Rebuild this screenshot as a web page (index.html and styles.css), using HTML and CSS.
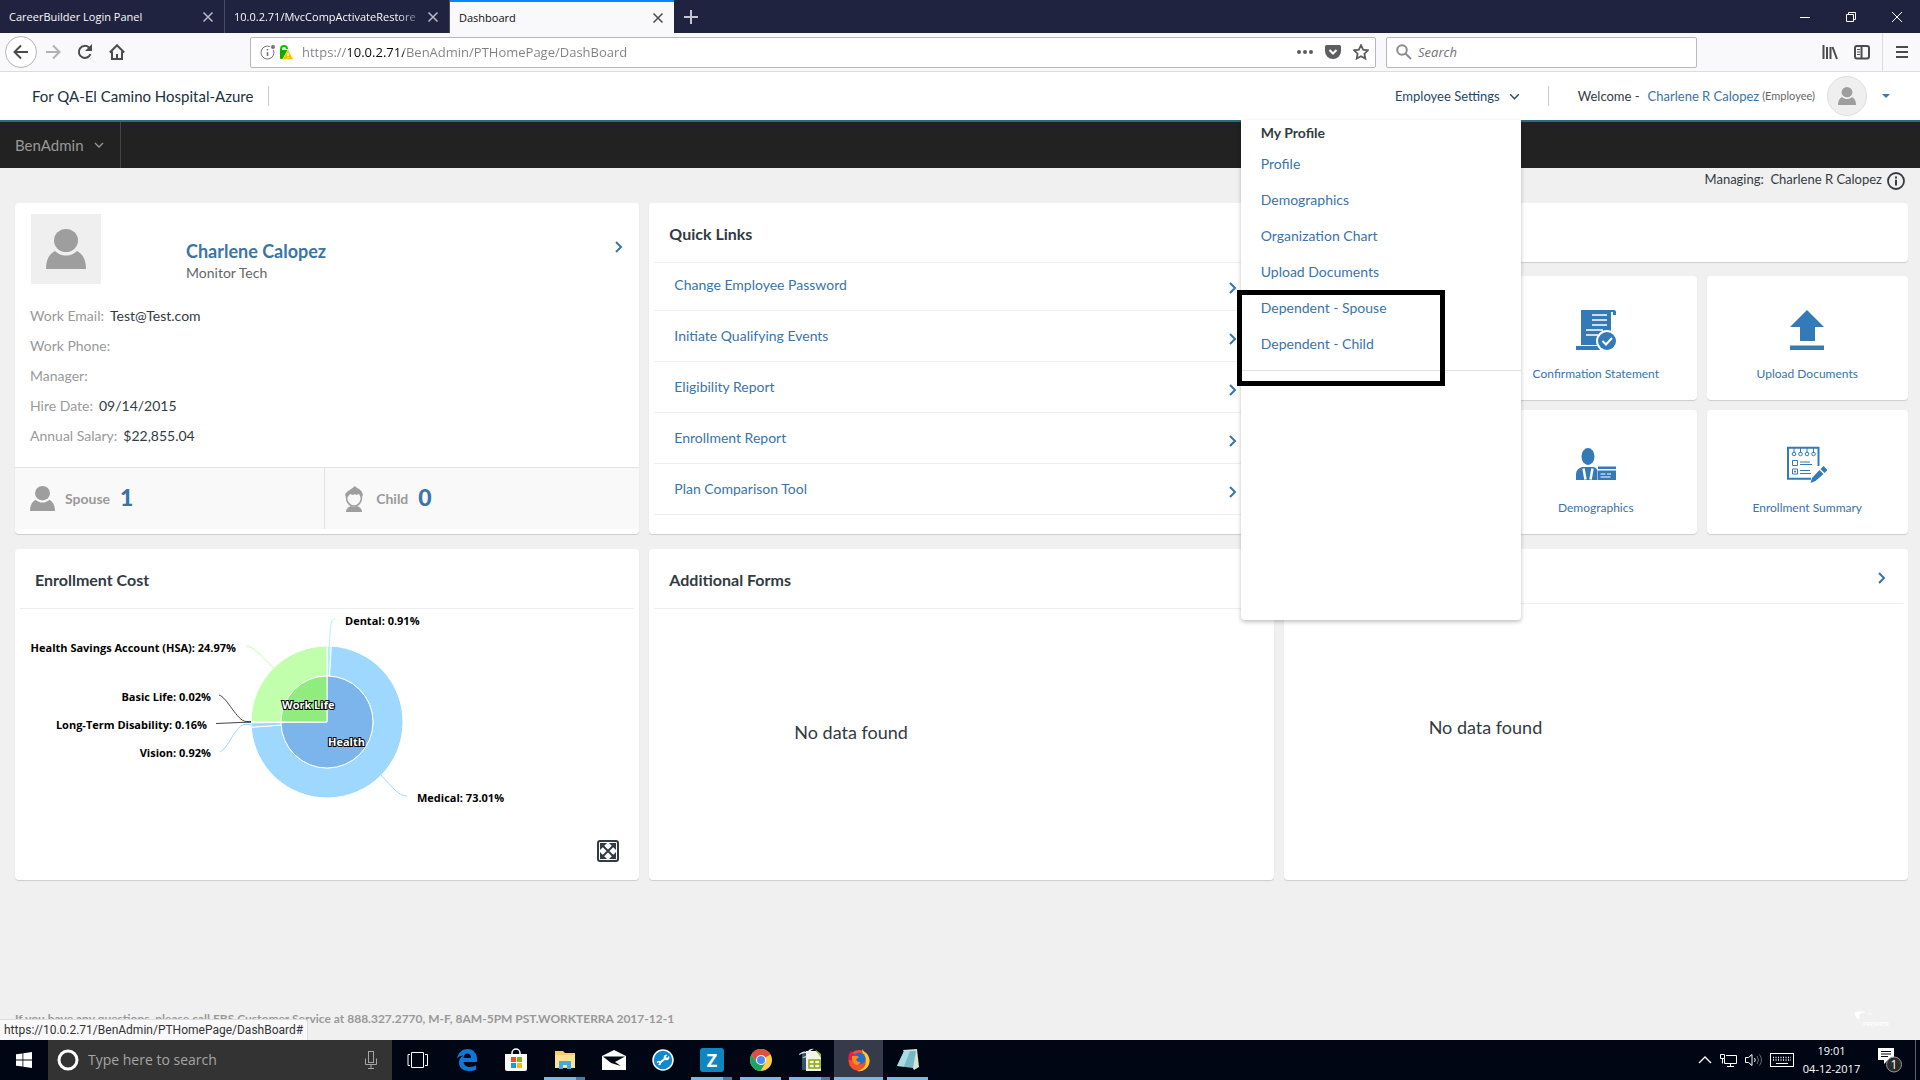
FILE: index.html
```html
<!DOCTYPE html>
<html lang="en">
<head>
    <meta charset="UTF-8">
    <meta name="viewport" content="width=device-width, initial-scale=1.0">
    <title>Dashboard</title>
    <link rel="stylesheet" href="styles.css">
</head>
<body>
    <svg class="sprite" width="0" height="0" aria-hidden="true">
        <symbol id="close" viewBox="0 0 12 12"><path d="M1.500 1.500l9 9M10.500 1.500l-9 9" fill="none" stroke="currentColor" stroke-width="1.500"/></symbol>
        <symbol id="chevron-down" viewBox="0 0 12 12"><path d="M2 4l4 4 4-4" fill="none" stroke="currentColor" stroke-width="1.300"/></symbol>
        <symbol id="chevron-right" viewBox="0 0 10 14"><path d="M2 2l5 5-5 5" fill="none" stroke="currentColor" stroke-width="2"/></symbol>
        <symbol id="person" viewBox="0 0 40 40"><ellipse cx="20" cy="11.500" rx="12" ry="11.500"/><path d="M0 40c0-9 3-15 9-18 6 6 16 6 22 0 6 3 9 9 9 18z"/></symbol>
    </svg>

    <!-- Browser tabs -->
    <div class="tab-bar">
        <div class="tab">
            <span class="tab-title">CareerBuilder Login Panel</span>
            <button class="tab-close" aria-label="Close tab"><svg width="12" height="12"><use href="#close"/></svg></button>
        </div>
        <div class="tab">
            <span class="tab-title faded">10.0.2.71/MvcCompActivateRestore</span>
            <button class="tab-close" aria-label="Close tab"><svg width="12" height="12"><use href="#close"/></svg></button>
        </div>
        <div class="tab active">
            <span class="tab-title">Dashboard</span>
            <button class="tab-close" aria-label="Close tab"><svg width="12" height="12"><use href="#close"/></svg></button>
        </div>
        <button class="new-tab" aria-label="New tab"><svg width="14" height="14" viewBox="0 0 14 14"><path d="M7 0v14M0 7h14" stroke="currentColor" stroke-width="2"/></svg></button>
        <div class="window-buttons">
            <button aria-label="Minimize"><svg width="10" height="10" viewBox="0 0 10 10"><path d="M0 5.500h10" stroke="#fff"/></svg></button>
            <button aria-label="Restore"><svg width="12" height="12" viewBox="0 0 12 12" fill="none" stroke="#fff"><path d="M1.500 3.500h7v7h-7zM3.500 3.500v-2h7v7h-2"/></svg></button>
            <button aria-label="Close"><svg width="12" height="12" viewBox="0 0 12 12"><path d="M1 1l10 10M11 1L1 11" stroke="#fff"/></svg></button>
        </div>
    </div>

    <!-- Browser toolbar -->
    <div class="toolbar">
        <button class="nav-btn back" aria-label="Back"><svg width="16" height="16" viewBox="0 0 16 16" fill="none" stroke="#4a4a4f" stroke-width="2"><path d="M15 8H2M8 1.500L1.500 8 8 14.500"/></svg></button>
        <button class="nav-btn" aria-label="Forward"><svg width="16" height="16" viewBox="0 0 16 16" fill="none" stroke="#b1b1b3" stroke-width="2"><path d="M1 8h13M8 1.500L14.500 8 8 14.500"/></svg></button>
        <button class="nav-btn" aria-label="Reload"><svg width="16" height="16" viewBox="0 0 16 16" fill="none" stroke="#4a4a4f" stroke-width="2"><path d="M13.500 10A6 6 0 1 1 12 3.500"/><path d="M15 0v7H8z" fill="#4a4a4f" stroke="none"/></svg></button>
        <button class="nav-btn" aria-label="Home"><svg width="16" height="16" viewBox="0 0 16 16" fill="none" stroke="#4a4a4f" stroke-width="2"><path d="M.800 8.500L8 1.300l7.200 7.200M3 7.500V15h10V7.500"/><path d="M7 10h2v5H7z" fill="#4a4a4f" stroke="none"/></svg></button>
        <div class="url-bar">
            <svg width="16" height="16" viewBox="0 0 16 16"><circle cx="7.500" cy="8.500" r="6.500" fill="none" stroke="#737373"/><path d="M7.500 5v1.500M7.500 8v4" stroke="#737373" stroke-width="1.500"/><circle cx="13" cy="3" r="3" fill="#fff"/><circle cx="13" cy="3" r="2" fill="#737373"/></svg>
            <svg width="16" height="16" viewBox="0 0 16 16"><path d="M3 7V5a3 3 0 0 1 6 0" fill="none" stroke="#12bc00" stroke-width="2"/><rect x="2" y="6" width="9" height="9" rx="1" fill="#12a800"/><path d="M10 5.500l5.500 10h-11z" fill="#ffbf00" stroke="#fff" stroke-width=".500"/><path d="M10 9v3M10 13v1" stroke="#fff" stroke-width="1.300"/></svg>
            <input class="url-input" type="text" aria-label="Address" value="https://10.0.2.71/BenAdmin/PTHomePage/DashBoard">
            <button aria-label="Page actions"><svg width="16" height="16" viewBox="0 0 16 16" fill="#5c5c61"><circle cx="2" cy="8" r="2"/><circle cx="8" cy="8" r="2"/><circle cx="14" cy="8" r="2"/></svg></button>
            <button aria-label="Save to Pocket"><svg width="16" height="16" viewBox="0 0 16 16"><path d="M1.500 1h13Q16 1 16 2.500V7a8 8 0 0 1-16 0V2.500Q0 1 1.500 1z" fill="#5c5c61"/><path d="M4.500 6L8 9.500 11.500 6" fill="none" stroke="#fff" stroke-width="2"/></svg></button>
            <button aria-label="Bookmark"><svg width="16" height="16" viewBox="0 0 16 16"><path d="M8 1.200l2.100 4.500 4.900.600-3.600 3.400.900 4.900L8 12.200l-4.300 2.400.900-4.900L1 6.300l4.900-.600z" fill="none" stroke="#5c5c61" stroke-width="1.800"/></svg></button>
        </div>
        <label class="search-bar">
            <svg width="16" height="16" viewBox="0 0 16 16" fill="none" stroke="#8c8c90" stroke-width="2"><circle cx="6" cy="6" r="4.800"/><path d="M9.500 9.500L15 15"/></svg>
            <input type="search" placeholder="Search" aria-label="Search">
        </label>
        <div class="toolbar-right">
            <button aria-label="Library"><svg width="16" height="16" viewBox="0 0 16 16" stroke="#4a4a4f" stroke-width="2"><path d="M1.500 1v14M5 3v12M8.500 3v12M10.500 3l4.500 12"/></svg></button>
            <button aria-label="Sidebars"><svg width="16" height="16" viewBox="0 0 16 16" fill="none" stroke="#4a4a4f" stroke-width="2"><rect x="1" y="2" width="14" height="12.500" rx="2"/><path d="M7.500 2v12"/><path d="M3 5.500h3M3 8h3M3 10.500h3" stroke-width="1"/></svg></button>
            <button class="menu-btn" aria-label="Menu"><svg width="12" height="14" viewBox="0 0 12 14" stroke="#4a4a4f" stroke-width="2"><path d="M0 2h12M0 7h12M0 12h12"/></svg></button>
        </div>
    </div>

    <!-- Application -->
    <header class="app-header">
        <div class="company">For QA-El Camino Hospital-Azure</div>
        <div class="header-right">
            <div class="settings">
                <button class="settings-btn">Employee Settings <svg width="13" height="13"><use href="#chevron-down"/></svg></button>
                <nav class="settings-menu">
                    <h4>My Profile</h4>
                    <ul>
                        <li><a href="#">Profile</a></li>
                        <li><a href="#">Demographics</a></li>
                        <li><a href="#">Organization Chart</a></li>
                        <li><a href="#">Upload Documents</a></li>
                        <li><a href="#">Dependent - Spouse</a></li>
                        <li><a href="#">Dependent - Child</a></li>
                    </ul>
                    <div class="highlight"></div>
                </nav>
            </div>
            <div class="welcome">
                <span class="welcome-label">Welcome -</span>
                <a href="#">Charlene R Calopez</a>
                <small>(Employee)</small>
                <span class="user-circle"><svg width="18" height="18"><use href="#person"/></svg></span>
                <button class="caret" aria-label="Account menu"></button>
            </div>
        </div>
    </header>

    <nav class="main-nav">
        <button>BenAdmin <svg width="12" height="12"><use href="#chevron-down"/></svg></button>
    </nav>

    <main>
        <div class="managing">
            <span>Managing:&nbsp; Charlene R Calopez</span>
            <svg width="18" height="18" viewBox="0 0 18 18"><circle cx="9" cy="9" r="8" fill="none" stroke="#333b42" stroke-width="1.800"/><path d="M9 4.500v2M9 7.800V13.500" stroke="#333b42" stroke-width="2"/></svg>
        </div>

        <div class="dashboard">
            <section class="card profile">
                <div class="profile-top">
                    <div class="photo"><svg width="40" height="40"><use href="#person"/></svg></div>
                    <div class="who">
                        <a href="#">Charlene Calopez</a>
                        <p>Monitor Tech</p>
                    </div>
                    <a class="go" href="#" aria-label="Open profile"><svg width="10" height="14"><use href="#chevron-right"/></svg></a>
                </div>
                <dl class="details">
                    <div><dt>Work Email:</dt><dd>Test@Test.com</dd></div>
                    <div><dt>Work Phone:</dt><dd></dd></div>
                    <div><dt>Manager:</dt><dd></dd></div>
                    <div><dt>Hire Date:</dt><dd>09/14/2015</dd></div>
                    <div><dt>Annual Salary:</dt><dd>$22,855.04</dd></div>
                </dl>
                <div class="family">
                    <div class="member">
                        <svg width="25" height="25"><use href="#person"/></svg>
                        <span>Spouse</span><b>1</b>
                    </div>
                    <div class="member child">
                        <svg width="18" height="26" viewBox="0 0 18 26"><path d="M10 0c1 2 7 3 8 9l-2 3-2-4-3 1-1-1-2 1-3-1-3 4-2-3C1 5 6 4 10 0z"/><path d="M2 8c-2 8 3 12 7 12s9-4 7-12" fill="none" stroke="#9e9e9e" stroke-width="1.500"/><path d="M1 26c0-3 2-5 5-6 2 1 4 1 6 0 3 1 5 3 5 6z"/></svg>
                        <span>Child</span><b>0</b>
                    </div>
                </div>
            </section>

            <section class="card quick-links">
                <h2>Quick Links</h2>
                <ul>
                    <li><a href="#">Change Employee Password <svg width="10" height="14"><use href="#chevron-right"/></svg></a></li>
                    <li><a href="#">Initiate Qualifying Events <svg width="10" height="14"><use href="#chevron-right"/></svg></a></li>
                    <li><a href="#">Eligibility Report <svg width="10" height="14"><use href="#chevron-right"/></svg></a></li>
                    <li><a href="#">Enrollment Report <svg width="10" height="14"><use href="#chevron-right"/></svg></a></li>
                    <li><a href="#">Plan Comparison Tool <svg width="10" height="14"><use href="#chevron-right"/></svg></a></li>
                </ul>
            </section>

            <section class="actions">
                <div class="card strip"></div>
                <div class="card tile"></div>
                <a class="card tile" href="#">
                    <svg width="40" height="40" viewBox="0 0 40 40"><path d="M5 0h33q2 0 2 2v3h-3V2h-2v33H5z"/><path d="M0 36h24v4H0z"/><path d="M16 5h15M16 10h15M16 15h15M10 20h17M10 25h12" stroke="#fff" stroke-width="1.500"/><circle cx="31" cy="31" r="11" fill="#fff"/><circle cx="31" cy="31" r="9"/><path d="M26.500 31l3.500 3.500 6-6.500" fill="none" stroke="#fff" stroke-width="2"/></svg>
                    <span>Confirmation Statement</span>
                </a>
                <a class="card tile" href="#">
                    <svg width="40" height="40" viewBox="0 0 40 40"><path d="M20 0l17 17h-9v14H13V17H3zM3 35.500h34V40H3z"/></svg>
                    <span>Upload Documents</span>
                </a>
                <div class="card tile"></div>
                <a class="card tile" href="#">
                    <svg width="40" height="40" viewBox="0 0 40 40"><ellipse cx="12" cy="12.500" rx="6.500" ry="8.500"/><path d="M0 36v-6q0-5 6-7h12q3 1 3.500 4V36z"/><path d="M7.500 24.500l2 11M16.500 24.500l-2 11" stroke="#fff" stroke-width="2.500"/><path d="M22 22.500h18v2.500H22zM22 26.500h18V36H22z"/><path d="M24.500 30h5M31 30h4M24.500 33h10" stroke="#fff" stroke-width="1"/></svg>
                    <span>Demographics</span>
                </a>
                <a class="card tile" href="#">
                    <svg width="40" height="40" viewBox="0 0 40 40"><g fill="none" stroke="#337ab7"><path d="M31.500 22V3.700H1v31h23" stroke-width="2"/><path d="M7 4v5M13.500 4v5M20 4v5M26.500 4v5" stroke-width="1"/><circle cx="7" cy="10" r="1.800"/><circle cx="13.500" cy="10" r="1.800"/><circle cx="20" cy="10" r="1.800"/><circle cx="26.500" cy="10" r="1.800"/><path d="M5.500 16.500h5v5h-5zM5.500 25h5v5h-5zM13 18h10M13 20.500h12M13 26.500h10M13 29.500h11"/></g><circle cx="8" cy="27.500" r="1"/><path d="M36.500 22l4 4-3 3-4-4zM32.500 26l4 4-8 7-5 2 1.500-5z"/></svg>
                    <span>Enrollment Summary</span>
                </a>
            </section>

            <section class="card panel">
                <h2>Enrollment Cost</h2>
                <div class="chart">
                    <svg width="624" height="230" viewBox="0 0 624 230">
                        <g class="slices">
                            <path fill="#aef0ff" d="M312 67V37A76 76 0 0 1 316.300 37.100L314.600 67.100A46 46 0 0 0 312 67z"/>
                            <path fill="#9fd8ff" d="M314.600 67.100L316.300 37.100A76 76 0 1 1 236.200 118.200L266.100 116.100A46 46 0 1 0 314.600 67.100z"/>
                            <path fill="#9fd8ff" d="M266.100 116.100L236.200 118.200A76 76 0 0 1 236 113.800L266 113.500z"/>
                            <path fill="#c2ffad" d="M266 112.800L236 112.800A76 76 0 0 1 312 37V67A46 46 0 0 0 266 112.800z"/>
                            <path fill="#7cb5ec" d="M312 113V67A46 46 0 1 1 266 113.500z"/>
                            <path fill="#90ed7d" d="M312 113H266A46 46 0 0 1 312 67z"/>
                        </g>
                        <g class="connectors">
                            <path stroke="#b3ecfa" d="M320 10C316 10 315 16 314.500 37"/>
                            <path stroke="#c2ffad" d="M231 37C238 37 246 47 259 59"/>
                            <path stroke="#434348" d="M204 86C212 88 222 112 231 112.500H236"/>
                            <path stroke="#434348" d="M201 114.500L230 113.300H236"/>
                            <path stroke="#9fd8ff" d="M205 143C213 140 220 117 229 115.500H236"/>
                            <path stroke="#9fd8ff" d="M366 166C378 179 384 187 392 187"/>
                        </g>
                        <g class="labels">
                            <text x="330" y="16">Dental: 0.91%</text>
                            <text x="221" y="43" text-anchor="end">Health Savings Account (HSA): 24.97%</text>
                            <text x="196" y="92" text-anchor="end">Basic Life: 0.02%</text>
                            <text x="192" y="120" text-anchor="end">Long-Term Disability: 0.16%</text>
                            <text x="196" y="148" text-anchor="end">Vision: 0.92%</text>
                            <text x="402" y="193">Medical: 73.01%</text>
                            <text class="inner" x="267" y="100">Work Life</text>
                            <text class="inner" x="313" y="137">Health</text>
                        </g>
                    </svg>
                    <button class="expand" aria-label="Expand chart"><svg width="22" height="22" viewBox="0 0 22 22"><rect x="1" y="1" width="20" height="20" rx="2" fill="#fff" stroke="#333b42" stroke-width="2"/><path d="M6 6l10 10M16 6L6 16" stroke="#333b42" stroke-width="2"/><path d="M3 3h7l-7 7zM19 3h-7l7 7zM3 19h7l-7-7zM19 19h-7l7-7z" fill="#333b42"/></svg></button>
                </div>
            </section>

            <section class="card panel">
                <h2>Additional Forms</h2>
                <p class="empty">No data found</p>
            </section>

            <section class="card panel">
                <div class="panel-bar"><a href="#" aria-label="Open"><svg width="10" height="14"><use href="#chevron-right"/></svg></a></div>
                <p class="empty">No data found</p>
            </section>
        </div>
    </main>

    <footer class="app-footer">
        <span>If you have any questions, please call EBS Customer Service at 888.327.2770, M-F, 8AM-5PM PST.WORKTERRA 2017-12-1</span>
        <svg class="watermark" width="46" height="24" viewBox="0 0 46 24"><path d="M11 3Q-1 1 1 6t5 3Q2 5 11 3zM16 0v7M13 5h6" fill="#fff" stroke="#fff" stroke-width=".500"/><text x="9" y="17">PREMIER</text></svg>
        <div class="status">https://10.0.2.71/BenAdmin/PTHomePage/DashBoard#</div>
    </footer>

    <!-- Windows taskbar -->
    <div class="taskbar">
        <button class="start" aria-label="Start"><svg width="16" height="16" viewBox="0 0 16 16" fill="#fff"><path d="M0 2.300l6.500-.900v6.200H0zM7.300 1.200L16 0v7.600H7.300zM0 8.400h6.500v6.200L0 13.700zM7.300 8.400H16V16l-8.700-1.200z"/></svg></button>
        <label class="task-search">
            <svg width="22" height="22" viewBox="0 0 22 22"><circle cx="11" cy="11" r="9" fill="none" stroke="#fff" stroke-width="3"/></svg>
            <input type="text" placeholder="Type here to search" aria-label="Type here to search">
            <svg width="12" height="18" viewBox="0 0 12 18" fill="none" stroke="#a5a5a5"><rect x="3.500" y=".500" width="5" height="11"/><path d="M.500 7.500v6h11v-6M6 13.500V17M3 17.500h6"/></svg>
        </label>
        <div class="apps">
            <button aria-label="Task view"><svg width="22" height="16" viewBox="0 0 22 16" fill="none" stroke="#fff"><path d="M4.500.500h12v15h-12zM3 2.500H1v11h2M18 2.500h2.500v11H18"/></svg></button>
            <button aria-label="Edge"><svg width="22" height="22" viewBox="0 0 22 22"><path d="M1 10C2 3 7 0 11.500 0 18 0 21 5 21 10v3H7.500c.500 3 3 5 6.500 5 2.500 0 4.500-.700 6-1.700v4.200c-2 1-4 1.500-7 1.500C7 22 3 18.500 3 13.500c0-3 1.500-5.500 4.500-7C4.500 6.500 2 8 1 10zm6.500-1H15c0-3-1.500-4.500-3.700-4.500C9 4.500 7.800 6.500 7.500 9z" fill="#0f78d4"/></svg></button>
            <button aria-label="Store"><svg width="24" height="24" viewBox="0 0 24 24"><path d="M8 8V5a4 4 0 0 1 8 0v3" fill="none" stroke="#fff" stroke-width="1.500"/><path d="M1 6h22v15q0 2-2 2H3q-2 0-2-2z" fill="#fff"/><path d="M7 9h5v5H7z" fill="#f25022"/><path d="M13 9h5v5h-5z" fill="#7fba00"/><path d="M7 15h5v5H7z" fill="#00a4ef"/><path d="M13 15h5v5h-5z" fill="#ffb900"/></svg></button>
            <button class="open stacked" aria-label="File Explorer"><svg width="24" height="22" viewBox="0 0 24 22"><path d="M2 2h8l2 2h10v14H2z" fill="#f5cf6b"/><path d="M2 6h20v13H2z" fill="#fbe393"/><path d="M6 20v-8h12v8h-4v-4h-4v4z" fill="#45a9db"/></svg></button>
            <button aria-label="Mail"><svg width="24" height="20" viewBox="0 0 24 20"><path d="M0 6L12 0l12 6v14H0z" fill="#fff"/><path d="M1 6.500h22L13 12l6 4-10-3z" fill="#010614"/></svg></button>
            <button aria-label="Tools"><svg width="22" height="22" viewBox="0 0 22 22"><circle cx="11" cy="11" r="10" fill="#118acb" stroke="#fff" stroke-width="1.500"/><path d="M7 14.500L15 8" stroke="#fff" stroke-width="2"/><circle cx="7" cy="14" r="2.200" fill="#fff"/><circle cx="14.500" cy="8.500" r="2.800" fill="#fff"/><path d="M14.500 8.500l3-4M7 14l-3 2" stroke="#118acb" stroke-width="1.800"/></svg></button>
            <button class="open stacked" aria-label="Z"><svg width="24" height="24" viewBox="0 0 24 24"><rect width="24" height="24" rx="3" fill="#0e86bf"/><text class="z-logo" x="12" y="19">Z</text></svg></button>
            <button class="open" aria-label="Chrome"><svg width="22" height="22" viewBox="0 0 22 22"><circle cx="11" cy="11" r="11" fill="#ffcd46"/><path d="M11 11L1.500 5.500A11 11 0 0 1 20.500 5.500z" fill="#dd5144"/><path d="M11 6h9.800A11 11 0 0 0 1.500 5.500l5 8z" fill="#dd5144"/><path d="M1.500 5.500A11 11 0 0 0 10.500 22l5-8.500-9 0z" fill="#1da462"/><circle cx="11" cy="11" r="5" fill="#fff"/><circle cx="11" cy="11" r="4" fill="#4c8bf5"/></svg></button>
            <button class="open stacked" aria-label="Spreadsheet"><svg width="24" height="24" viewBox="0 0 24 24"><path d="M4 6h5v16H4z" fill="#35536b"/><path d="M8 3h10l5 5v15H8z" fill="#f2f5e6"/><path d="M17 1l6 5v4z" fill="#9cb63a"/><path d="M11 12h11v8H11zM16.500 12v8M11 16h11" fill="#f6f9cc" stroke="#8ba51e" stroke-width="1.500"/><path d="M0 7q5-5 9-3 3-4 7-3-4 1-5 5-4-2-11 1zM4 10q3-3 6-1" fill="#dfe9f0"/></svg></button>
            <button class="open current" aria-label="Firefox"><svg width="24" height="24" viewBox="0 0 24 24"><circle cx="12" cy="12.500" r="10.500" fill="#f9502a"/><path d="M15 1q2 3 4 4 4 4 3.500 9A10.500 10.500 0 0 1 10 23q9-2 9-10 0-4-3-6z" fill="#ffcb2b"/><path d="M1.500 12Q1 6 4 3l1.500 2.500L9 6l-2 3 1 4z" fill="#e6204c"/><circle cx="12.500" cy="10.500" r="6" fill="#1f6fd0"/><path d="M5 8q5-1 7 1l-3 2.500q1 3 4.500 2.500-1 3-4 3-5-1-4.500-9z" fill="#ff8a16"/></svg></button>
            <button class="open" aria-label="Notepad"><svg width="24" height="24" viewBox="0 0 24 24"><path d="M7 2l14-1 2 18-5 3z" fill="#d9e2d0"/><path d="M8 3h12l-3 17-16-2z" fill="#75b8c6"/><path d="M8 3h6L8 18.500l-7-.500z" fill="#a9dbe2"/></svg></button>
        </div>
        <div class="tray">
            <svg width="14" height="8" viewBox="0 0 14 8"><path d="M1 7l6-6 6 6" fill="none" stroke="#fff" stroke-width="1.300"/></svg>
            <svg width="17" height="15" viewBox="0 0 17 15" fill="none" stroke="#fff"><path d="M6 2.500h10.500v8H4.500V6M10.500 10.500v3M7 13.500h7M.500 1.500h4v4h-4zM2.500 5.500v5"/></svg>
            <svg width="17" height="14" viewBox="0 0 17 14" fill="none" stroke="#fff"><path d="M.500 4.500h3L7 1.500v11l-3.500-3h-3z"/><path d="M9.500 5q1.500 2 0 4"/><path d="M12 3q3 4 0 8M14.500 1.500q4 5.500 0 11" stroke="#666d7c"/></svg>
            <svg width="24" height="14" viewBox="0 0 24 14" fill="none" stroke="#fff"><rect x=".500" y=".500" width="23" height="13"/><path d="M3 4.500h18M3 7h18" stroke-dasharray="1 1.500" stroke-width="1.500"/><path d="M6 10.500h12"/></svg>
            <time class="clock"><span>19:01</span><span>04-12-2017</span></time>
            <button class="notify" aria-label="Notifications"><svg width="24" height="25" viewBox="0 0 24 25"><path d="M0 0h16v12h-6l-4 4v-4H0z" fill="#fff"/><path d="M3 3.500h10M3 6h10M3 8.500h7" stroke="#010614"/><circle cx="16" cy="16.500" r="7.500" fill="#2b2b2b" stroke="#9a9a9a"/><text x="16" y="21">1</text></svg></button>
        </div>
    </div>
</body>
</html>
```
FILE: styles.css
```css
* {
    box-sizing: border-box;
}

body {
    margin: 0;
    min-height: 100vh;
    display: flex;
    flex-direction: column;
    font-family: Lato, "Open Sans", sans-serif;
    font-size: 14px;
    line-height: 20px;
    color: #333b42;
    background: #f0f0f0;
}

a {
    color: #3a74a8;
    text-decoration: none;
}

button {
    border: none;
    background: none;
    padding: 0;
    font: inherit;
    color: inherit;
    display: flex;
    align-items: center;
    justify-content: center;
}

input {
    border: none;
    background: none;
    outline: none;
    padding: 0;
    font: inherit;
    min-width: 0;
    flex: 1;
}

ul, dl, dd, p, h2, h4 {
    margin: 0;
    padding: 0;
}

ul {
    list-style: none;
}

svg {
    flex: none;
    display: block;
}

.sprite {
    position: absolute;
}

/* Browser */
.tab-bar {
    display: flex;
    height: 33px;
    background: #20233f;
    color: #f9f9fa;
    font-family: "Open Sans", sans-serif;
    font-size: 11px;
}

.tab {
    width: 225px;
    padding: 0 9px;
    display: flex;
    align-items: center;
    border-right: 1px solid #4a4c63;
}

.tab.active {
    width: 224px;
    background: #f9f9fb;
    color: #0c0c0d;
    border-top: 2px solid #0a84ff;
    border-right: none;
}

.tab-title {
    flex: 1;
    overflow: hidden;
    white-space: nowrap;
}

.tab-title.faded {
    mask-image: linear-gradient(to right, #000 85%, transparent);
}

.tab-close {
    width: 14px;
    color: #b9bac5;
}

.tab.active .tab-close {
    color: #4a4a4f;
}

.new-tab {
    width: 34px;
    color: #c5c6cf;
}

.window-buttons {
    margin-left: auto;
    display: flex;
}

.window-buttons button {
    width: 46px;
}

.toolbar {
    height: 39px;
    display: flex;
    align-items: center;
    background: #f9f9fb;
    border-bottom: 1px solid #dcdcde;
    padding-left: 5px;
    font-family: "Open Sans", sans-serif;
}

.nav-btn {
    width: 32px;
    height: 32px;
}

.nav-btn.back {
    border: 1px solid #b5b5b7;
    border-radius: 50%;
    background: #fff;
}

.url-bar,
.search-bar {
    height: 31px;
    display: flex;
    align-items: center;
    background: #fff;
    border: 1px solid #b8b8ba;
    border-radius: 2px;
}

.url-bar {
    flex: 1;
    margin-left: 117px;
    padding: 0 1px 0 9px;
    gap: 2px;
}

.url-bar button {
    width: 26px;
}

/* host part of the address is darker than the rest */
.url-input {
    margin-left: 6px;
    font-size: 13px;
    color: transparent;
    background: linear-gradient(to right, #808084 46px, #0c0c0d 46px, #0c0c0d 102px, #808084 102px);
    background-clip: text;
    -webkit-background-clip: text;
}

.search-bar {
    width: 311px;
    margin-left: 10px;
    padding: 0 9px;
    gap: 6px;
    font-size: 13px;
    font-style: italic;
}

.search-bar input::placeholder {
    color: #737377;
}

.toolbar-right {
    width: 223px;
    height: 100%;
    display: flex;
    justify-content: flex-end;
}

.toolbar-right button {
    width: 32px;
}

.toolbar-right .menu-btn {
    width: 38px;
    margin-left: 4px;
    border-left: 1px solid #dcdcde;
}

/* App header */
.app-header {
    height: 50px;
    display: flex;
    align-items: center;
    justify-content: space-between;
    background: #fff;
    border-bottom: 2px solid #23707f;
    padding-left: 32px;
}

.company {
    font-size: 15px;
    padding-right: 15px;
    border-right: 1px solid #ccc;
    color: #20303c;
}

.header-right {
    display: flex;
    align-items: center;
    align-self: stretch;
    font-size: 13px;
}

.settings {
    position: relative;
    align-self: stretch;
    display: flex;
    align-items: center;
}

.settings-btn {
    gap: 8px;
    color: #234968;
}

.settings-menu {
    position: absolute;
    top: 100%;
    right: 0;
    width: 280px;
    height: 500px;
    padding-top: 2px;
    font-size: 14px;
    background: #fff;
    border-radius: 0 0 4px 4px;
    box-shadow: 0 2px 4px rgba(0, 0, 0, 0.25);
    z-index: 10;
}

.settings-menu h4 {
    padding-left: 20px;
    font-size: 14px;
    line-height: 22px;
}

.settings-menu ul {
    padding: 2px 0 8px 20px;
    border-bottom: 1px solid #e2e2e2;
}

.settings-menu li {
    line-height: 36px;
}

.highlight {
    position: absolute;
    top: 170px;
    left: -4px;
    width: 208px;
    height: 96px;
    border: 5px solid #000;
}

.welcome {
    display: flex;
    align-items: center;
    margin-left: 27px;
    padding-left: 30px;
    position: relative;
}

.welcome::before {
    content: '';
    position: absolute;
    left: 0;
    top: 10px;
    height: 20px;
    border-left: 1px solid #ccc;
}

.welcome-label {
    margin-right: 8px;
}

.welcome small {
    font-size: 11px;
    margin-left: 3px;
    color: #666;
}

.user-circle {
    width: 40px;
    height: 40px;
    margin: 0 15px 0 12px;
    display: flex;
    align-items: center;
    justify-content: center;
    border: 1px solid #ddd;
    border-radius: 50%;
    background: #efefef;
    fill: #9e9e9e;
}

.caret {
    margin-right: 30px;
    border: 4px solid transparent;
    border-top-color: #337ab7;
    border-bottom: none;
}

.main-nav {
    height: 46px;
    display: flex;
    background: #222;
    color: #999;
    font-size: 15px;
}

.main-nav button {
    padding: 0 15px;
    gap: 9px;
    border-right: 1px solid #444;
}

/* Dashboard */
main {
    flex: 1;
    padding: 0 12px 0 15px;
}

.managing {
    height: 35px;
    padding: 1px 3px 0 0;
    display: flex;
    justify-content: flex-end;
    gap: 5px;
    font-size: 13px;
}

.managing svg {
    margin-top: 3px;
}

.dashboard {
    display: grid;
    grid-template-columns: repeat(3, minmax(0, 1fr));
    grid-template-rows: 331px 331px;
    gap: 15px 10px;
}

.card {
    background: #fff;
    border-radius: 4px;
    box-shadow: 0 1px 1px rgba(0, 0, 0, 0.15);
}

.card h2 {
    margin: 0 5px;
    padding: 3px 15px 0;
    font-size: 16px;
    line-height: 56px;
    border-bottom: 1px solid #eee;
}

.profile {
    display: flex;
    flex-direction: column;
    padding-bottom: 5px;
}

.profile-top {
    display: flex;
    padding: 11px 15px 0 16px;
}

.photo {
    width: 70px;
    height: 70px;
    display: flex;
    align-items: center;
    justify-content: center;
    background: #efefef;
    fill: #9e9e9e;
}

.who {
    flex: 1;
    padding: 25px 0 0 85px;
}

.who a {
    display: block;
    font-size: 18px;
    font-weight: bold;
    line-height: 24px;
}

.who p {
    color: #666;
}

.go {
    padding-top: 26px;
}

.details {
    padding: 17px 15px 0;
    line-height: 30px;
}

.details div {
    display: flex;
    gap: 6px;
}

.details dt {
    color: #999;
}

.family {
    margin-top: auto;
    height: 62px;
    display: flex;
    background: #f9f9f9;
    border-top: 1px solid #e3e3e3;
}

.member {
    flex: 1;
    padding: 0 15px;
    display: flex;
    align-items: center;
    fill: #9e9e9e;
    color: #999;
    font-weight: bold;
}

.member.child {
    padding-left: 20px;
    border-left: 1px solid #e3e3e3;
}

.member span {
    margin: 0 10px;
}

.child span {
    margin-left: 13px;
}

.member b {
    padding-bottom: 4px;
    font-size: 23px;
    color: #3a74a8;
}

.quick-links ul {
    margin: 0 5px;
}

.quick-links a {
    height: 51px;
    padding: 0 31px 0 20px;
    display: flex;
    align-items: center;
    justify-content: space-between;
    border-bottom: 1px solid #eee;
}

.quick-links li:first-child a {
    height: 48px;
    padding-bottom: 3px;
}

.quick-links svg {
    margin-top: 5px;
}

.actions {
    display: grid;
    grid-template-columns: repeat(3, minmax(0, 1fr));
    grid-template-rows: 63px 1fr 1fr;
    gap: 10px;
}

.strip {
    grid-column: 1 / -1;
    margin-bottom: 4px;
}

.tile {
    padding-top: 34px;
    display: flex;
    flex-direction: column;
    align-items: center;
    gap: 14px;
    font-size: 12px;
    fill: #337ab7;
}

.panel-bar {
    height: 55px;
    margin: 0 5px;
    padding: 22px 16px 0;
    display: flex;
    justify-content: flex-end;
    border-bottom: 1px solid #eee;
}

.chart {
    position: relative;
}

.labels {
    font-family: "Open Sans", sans-serif;
    font-size: 11px;
    font-weight: bold;
    fill: #000;
}

.labels .inner {
    fill: #fff;
    stroke: #000;
    stroke-width: 2px;
    paint-order: stroke;
}

.slices {
    stroke: #fff;
}

.connectors {
    fill: none;
}

.expand {
    position: absolute;
    right: 20px;
    top: 231px;
}

.empty {
    padding: 111px 0 0 145px;
    font-size: 18px;
    line-height: 24px;
}

.app-footer {
    position: relative;
    display: flex;
    justify-content: space-between;
    height: 31px;
    padding: 0 20px 0 15px;
    font-size: 12px;
    font-weight: bold;
    color: #999;
}

.watermark {
    font-size: 6px;
    fill: #fff;
}

.status {
    position: absolute;
    left: 0;
    bottom: 0;
    padding: 0 4px;
    font-family: Roboto, sans-serif;
    font-size: 12px;
    font-weight: normal;
    color: #333;
    background: #f9f9fb;
    border: 1px solid #ddd;
    border-width: 1px 1px 0 0;
    border-radius: 0 3px 0 0;
}

/* Taskbar */
.taskbar {
    height: 40px;
    display: flex;
    background: #010614;
    color: #fff;
    font-family: "Open Sans", sans-serif;
}

.start {
    width: 48px;
}

.task-search {
    width: 344px;
    padding: 0 15px 0 9px;
    display: flex;
    align-items: center;
    gap: 9px;
    background: #333;
    font-size: 14px;
}

.task-search input::placeholder {
    color: #a5a5a5;
}

.apps {
    display: flex;
    margin-left: 1px;
}

.apps button {
    width: 49px;
    padding-top: 3px;
    border-bottom: 3px solid transparent;
}

.apps .open {
    background: linear-gradient(#76b9ed, #76b9ed) center bottom / 41px 3px no-repeat border-box;
}

.apps .stacked {
    background: linear-gradient(to right, #76b9ed 32px, #4e7ba0 32px) center bottom / 41px 3px no-repeat border-box;
}

.apps .current {
    background: #363b4c;
    border-bottom-color: #76b9ed;
}

.z-logo {
    fill: #fff;
    font-size: 18px;
    font-weight: bold;
    text-anchor: middle;
}

.tray {
    flex: 1;
    display: flex;
    align-items: center;
    justify-content: flex-end;
    gap: 8px;
    padding-right: 4px;
}

.clock {
    width: 59px;
    display: flex;
    flex-direction: column;
    text-align: center;
    white-space: nowrap;
    font-size: 11px;
    line-height: 18px;
}

.notify {
    height: 100%;
    padding: 0 13px 0 9px;
    border-right: 1px solid #5d6270;
}

.notify text {
    fill: #fff;
    font-size: 12px;
    text-anchor: middle;
}
```
